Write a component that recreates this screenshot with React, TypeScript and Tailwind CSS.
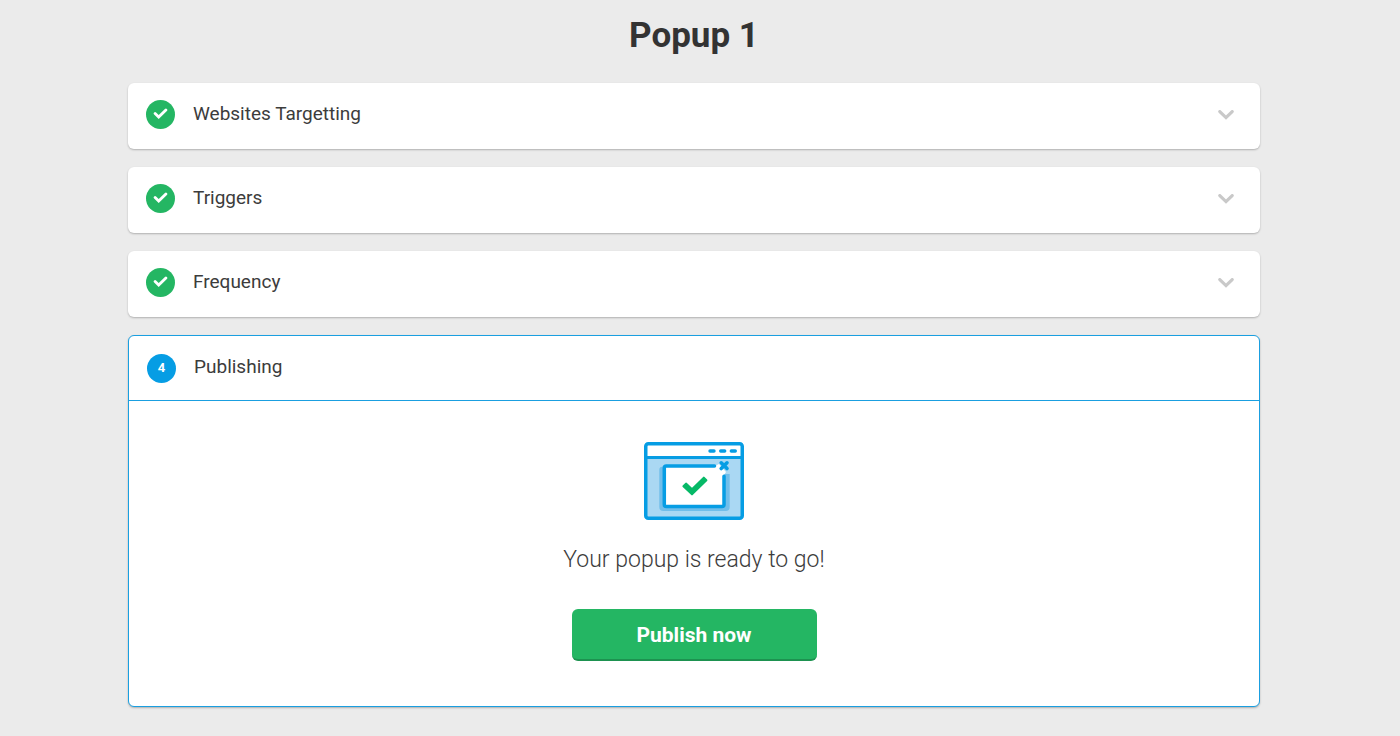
const completedSteps = ["Websites Targetting", "Triggers", "Frequency"];

function CheckBadge() {
  return (
    <span className="flex size-[29px] shrink-0 items-center justify-center rounded-full bg-[#24b663]">
      <svg width="15" height="13" viewBox="0 0 15 13" fill="none" aria-hidden="true">
        <path
          d="M2.1 5.5 5.7 9.1 12.9 1.9"
          stroke="#fff"
          strokeWidth="2.8"
          strokeLinecap="round"
        />
      </svg>
    </span>
  );
}

function ChevronDown() {
  return (
    <svg width="16" height="10" viewBox="0 0 16 10" fill="none" aria-hidden="true">
      <path d="M1.8 1.6 8 7.6 14.2 1.6" stroke="#c9c9c9" strokeWidth="3.2" strokeLinecap="round" />
    </svg>
  );
}

function PopupIllustration() {
  return (
    <svg width="100" height="78" viewBox="0 0 100 78" fill="none" aria-hidden="true">
      <rect x="1.7" y="1.7" width="96.6" height="74.6" rx="2.5" fill="#aad8f3" />
      <path d="M2 15V4a2 2 0 0 1 2-2h92a2 2 0 0 1 2 2v11Z" fill="#fff" />
      <path
        d="M20 24.7h-1.7a3 3 0 0 0-3 3V65a4 4 0 0 0 4 4h62.4a4 4 0 0 0 4-4V32H20Z"
        fill="#71beea"
      />
      <path d="M21 24h54l5 6v34H21Z" fill="#fff" />
      <path d="M71 24l4-2 7 8-2 3Z" fill="#fff" />
      <rect
        x="1.75"
        y="1.75"
        width="96.5"
        height="74.5"
        rx="2.5"
        stroke="#069de4"
        strokeWidth="3.5"
      />
      <path d="M2 15.5h96" stroke="#069de4" strokeWidth="3" />
      <path
        d="M66 9h4M76.7 9h4M87.3 9h4"
        stroke="#069de4"
        strokeWidth="3.4"
        strokeLinecap="round"
      />
      <path
        d="M70.5 24H22.3a2 2 0 0 0-2 2v36.5a2 2 0 0 0 2 2H78a2 2 0 0 0 2-2V34.3"
        stroke="#069de4"
        strokeWidth="3.5"
        strokeLinecap="round"
      />
      <path
        d="M77.2 20.8l5.8 5.8M83 20.8l-5.8 5.8"
        stroke="#069de4"
        strokeWidth="3.6"
        strokeLinecap="round"
      />
      <path
        d="M42 41.6 48 47.2 59.8 35.6 62.4 38.2 48 52.4 39.4 44.2Z"
        fill="#06b967"
        stroke="#06b967"
        strokeWidth="2"
        strokeLinejoin="round"
      />
    </svg>
  );
}

function StepCard({ title }: { title: string }) {
  return (
    <button
      type="button"
      className="flex h-[66px] w-full items-center rounded-md bg-white pr-[26px] pb-[3px] pl-[18px] text-left shadow-[0_1px_2px_rgba(0,0,0,0.25)]"
    >
      <CheckBadge />
      <span className="ml-[18px] flex-1 pb-0.5 text-[19px] leading-6">{title}</span>
      <ChevronDown />
    </button>
  );
}

export default function App() {
  return (
    <div className="min-h-screen bg-[#ebebeb] pt-3 pr-[140px] pb-7 pl-32 font-['Roboto',sans-serif] text-[#3c3c3c]">
      <h1 className="text-center text-[35px] leading-[48px] font-bold text-[#333]">Popup 1</h1>

      <main className="mt-[23px] flex flex-col gap-[18px]">
        {completedSteps.map((title) => (
          <StepCard key={title} title={title} />
        ))}

        <section className="rounded-md border border-[#1a9fe0] bg-white shadow-[0_1px_2px_rgba(0,0,0,0.25)]">
          <header className="flex h-[65px] items-center border-b border-[#1a9fe0] pl-[18px]">
            <span className="flex size-[29px] items-center justify-center rounded-full bg-[#069de4] text-[13px] font-bold text-white">
              4
            </span>
            <h2 className="ml-[18px] pb-0.5 text-[19px] leading-6">Publishing</h2>
          </header>

          <div className="flex flex-col items-center pt-[41px] pb-[45px]">
            <PopupIllustration />
            <p className="mt-6 text-[23px] leading-8 font-light">Your popup is ready to go!</p>
            <button
              type="button"
              className="mt-[33px] h-[52px] w-[245px] rounded-md border-b-2 border-[#1d9250] bg-[#24b663] pt-0.5 text-[21px] leading-6 font-bold text-white"
            >
              Publish now
            </button>
          </div>
        </section>
      </main>
    </div>
  );
}
